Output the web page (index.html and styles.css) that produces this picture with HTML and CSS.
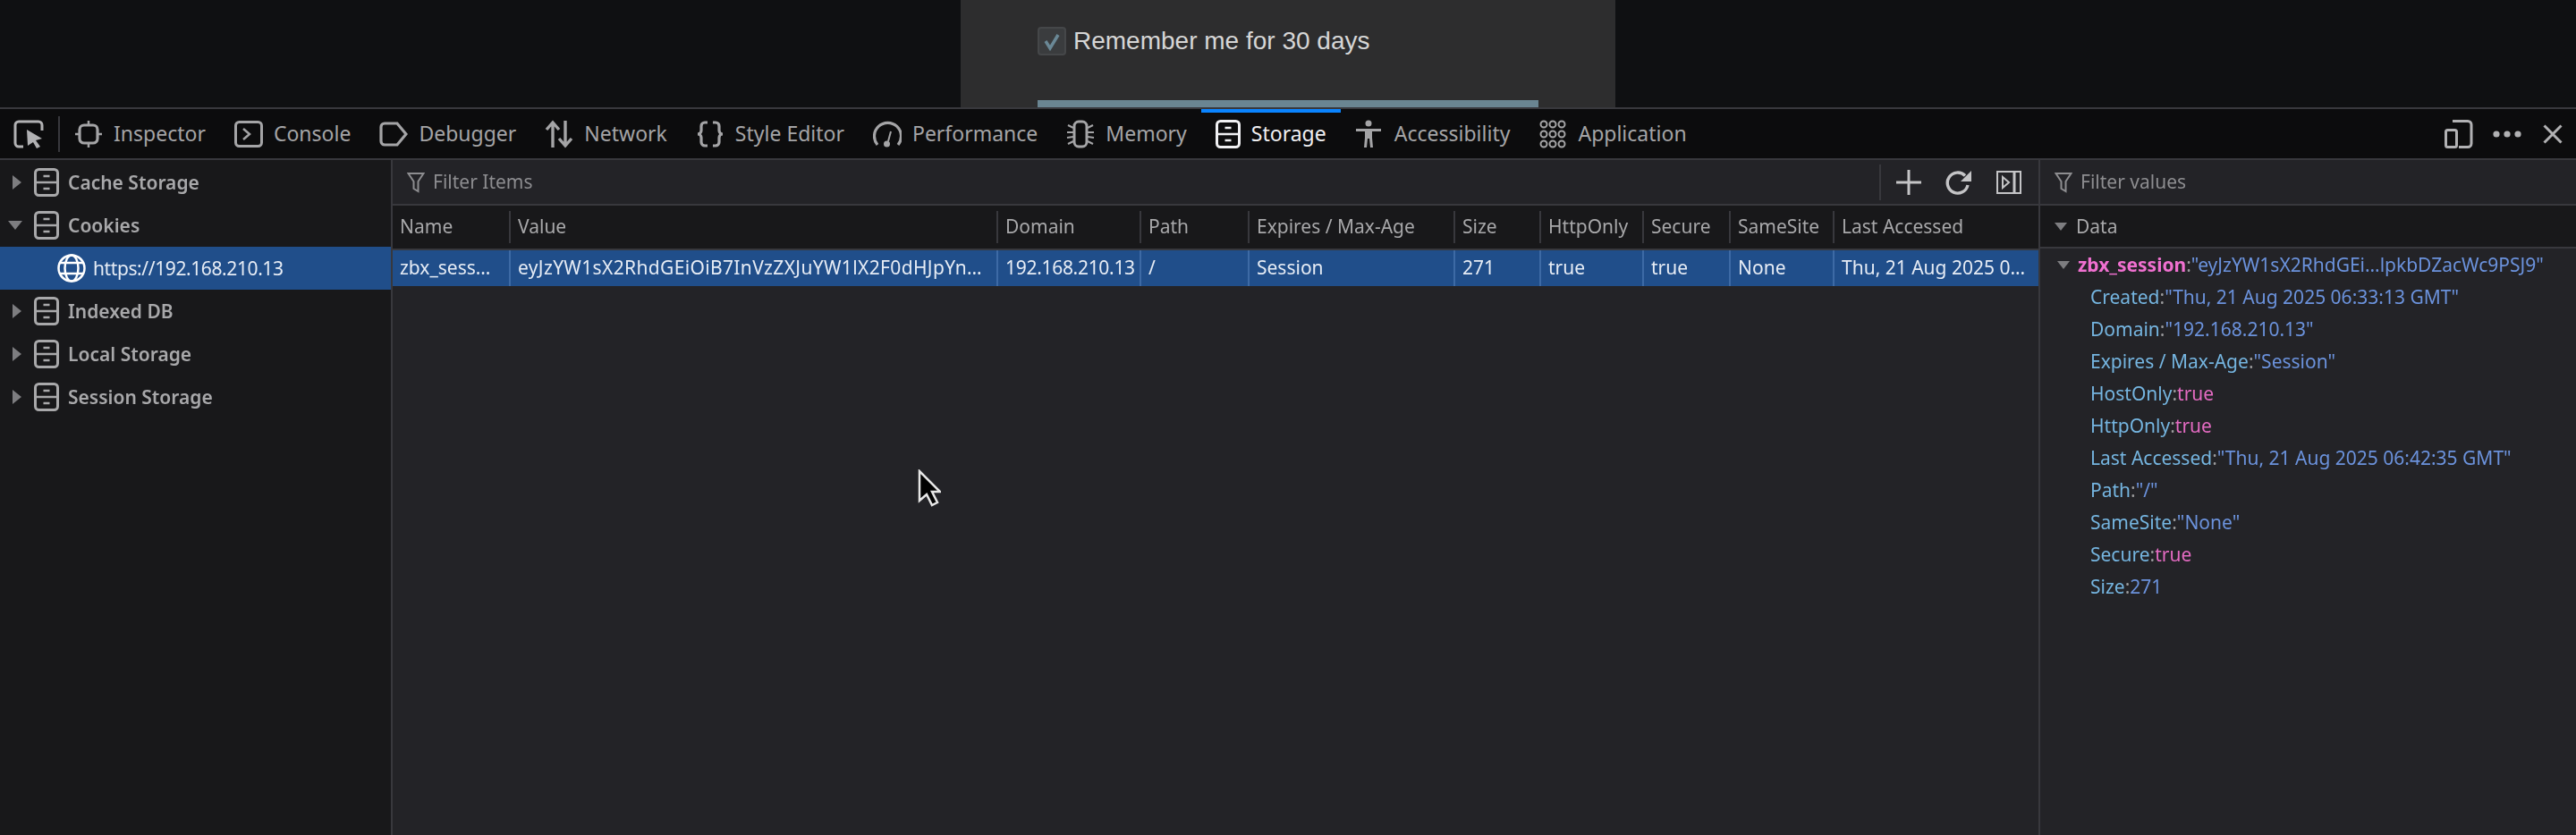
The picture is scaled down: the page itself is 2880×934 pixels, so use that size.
FILE: index.html
```html
<!DOCTYPE html>
<html lang="en">
<head>
<meta charset="utf-8">
<title>Storage</title>
<link rel="stylesheet" href="styles.css">
</head>
<body>
<svg class="defs" width="0" height="0" aria-hidden="true">
  <symbol id="cab" viewBox="0 0 28 32"><rect x="1.500" y="1.500" width="25" height="29" rx="4" fill="none" stroke="currentColor" stroke-width="3"/><path d="M2 16h24M10.500 9h7M10.500 23h7" fill="none" stroke="currentColor" stroke-width="2.600"/></symbol>
  <symbol id="funnel" viewBox="0 0 20 24"><path d="M1.500 2h17l-6 9v11l-5-3v-8z" fill="none" stroke="currentColor" stroke-width="2"/></symbol>
</svg>

<header class="page">
  <div class="login">
    <label class="remember"><span class="check"><svg viewBox="0 0 32 32" width="32" height="32"><path d="M9 16l5 8 9-15" fill="none" stroke="#6a8896" stroke-width="3.500"/></svg></span>Remember me for 30 days</label>
    <div class="submit"></div>
  </div>
</header>

<nav class="toolbar">
  <span class="picker"><svg viewBox="0 0 34 32" width="34" height="32"><path d="M11 30H6a4 4 0 0 1-4-4V6a4 4 0 0 1 4-4h22a4 4 0 0 1 4 4v6" fill="none" stroke="currentColor" stroke-width="3"/><path d="M15 11l17 10-7 2 5 7-4 2-4-7-6 4z" fill="currentColor"/></svg></span>
  <span class="vsep"></span>
  <a class="tab"><svg viewBox="0 0 32 32" width="32" height="32"><rect x="6" y="6" width="20" height="20" rx="5" fill="none" stroke="currentColor" stroke-width="3.200"/><path d="M16 1v5M16 26v5M1 16h5M26 16h5" stroke="currentColor" stroke-width="2.500"/></svg>Inspector</a>
  <a class="tab"><svg viewBox="0 0 32 32" width="32" height="32"><rect x="1.500" y="2.500" width="29" height="27" rx="4" fill="none" stroke="currentColor" stroke-width="3"/><path d="M10 10l7 6-7 6" fill="none" stroke="currentColor" stroke-width="2.500"/></svg>Console</a>
  <a class="tab"><svg viewBox="0 0 32 32" width="32" height="32"><path d="M6 4h14l10 12-10 12H6a4 4 0 0 1-4-4V8a4 4 0 0 1 4-4z" fill="none" stroke="currentColor" stroke-width="3.200"/></svg>Debugger</a>
  <a class="tab"><svg viewBox="0 0 32 32" width="32" height="32"><path d="M9 31V4M2 11l7-8 7 8M23 1v27M16 21l7 8 7-8" fill="none" stroke="currentColor" stroke-width="3.400"/></svg>Network</a>
  <a class="tab"><svg viewBox="0 0 32 32" width="32" height="32"><path d="M13 3H10a4 4 0 0 0-4 4v5a4 4 0 0 1-4 4 4 4 0 0 1 4 4v5a4 4 0 0 0 4 4h3M19 3h3a4 4 0 0 1 4 4v5a4 4 0 0 0 4 4 4 4 0 0 0-4 4v5a4 4 0 0 1-4 4h-3" fill="none" stroke="currentColor" stroke-width="3.200"/></svg>Style Editor</a>
  <a class="tab"><svg viewBox="0 0 32 32" width="32" height="32"><path d="M5 28A15 15 0 1 1 28 28" fill="none" stroke="currentColor" stroke-width="3.200"/><path d="M20 13l-3 11" stroke="currentColor" stroke-width="2"/><circle cx="15.500" cy="27" r="3.500" fill="currentColor"/></svg>Performance</a>
  <a class="tab"><svg viewBox="0 0 32 32" width="32" height="32"><rect x="9" y="2" width="14" height="28" rx="5" fill="none" stroke="currentColor" stroke-width="3"/><path d="M8 9L2 6M8 14H1M8 19l-7 1M8 24l-6 3M24 9l6-3M24 14h7M24 19l7 1M24 24l6 3" stroke="currentColor" stroke-width="2.200"/></svg>Memory</a>
  <a class="tab active"><svg width="28" height="32"><use href="#cab"/></svg>Storage</a>
  <a class="tab"><svg viewBox="0 0 32 32" width="32" height="32"><circle cx="15" cy="4" r="3.500" fill="currentColor"/><path d="M1 10h28v3H19v7l1 11h-3l-1-10h-2l-1 10h-3l1-11v-7H1z" fill="currentColor"/></svg>Accessibility</a>
  <a class="tab"><svg viewBox="0 0 32 32" width="32" height="32" fill="none" stroke="currentColor" stroke-width="2"><circle cx="6" cy="5" r="3.500"/><circle cx="16" cy="5" r="3.500"/><circle cx="26" cy="5" r="3.500"/><circle cx="6" cy="16" r="3.500"/><circle cx="16" cy="16" r="3.500"/><circle cx="26" cy="16" r="3.500"/><circle cx="6" cy="27" r="3.500"/><circle cx="16" cy="27" r="3.500"/><circle cx="26" cy="27" r="3.500"/></svg>Application</a>
  <span class="tool-end">
    <svg viewBox="0 0 32 32" width="32" height="32" fill="none" stroke="currentColor" stroke-width="3"><path d="M9 1.500h17a4 4 0 0 1 4 4v21a4 4 0 0 1-4 4H16"/><rect x="1.500" y="11.500" width="12" height="19" rx="2"/></svg>
    <svg viewBox="0 0 32 8" width="32" height="8" fill="currentColor"><circle cx="4" cy="4" r="3.600"/><circle cx="16" cy="4" r="3.600"/><circle cx="28" cy="4" r="3.600"/></svg>
    <svg class="close" viewBox="0 0 22 22" width="22" height="22"><path d="M1.500 1.500l19 19M20.500 1.500l-19 19" stroke="currentColor" stroke-width="3"/></svg>
  </span>
</nav>

<main class="panels">
  <aside class="tree">
    <div class="node"><i class="arrow right"></i><svg width="28" height="32"><use href="#cab"/></svg>Cache Storage</div>
    <div class="node"><i class="arrow down"></i><svg width="28" height="32"><use href="#cab"/></svg>Cookies</div>
    <div class="node leaf selected"><svg viewBox="0 0 32 32" width="32" height="32" fill="none" stroke="#fff" stroke-width="2.500"><circle cx="16" cy="16" r="14.500"/><ellipse cx="16" cy="16" rx="7.500" ry="14.500"/><path d="M3 10h26M3 22h26"/></svg>https://192.168.210.13</div>
    <div class="node"><i class="arrow right"></i><svg width="28" height="32"><use href="#cab"/></svg>Indexed DB</div>
    <div class="node"><i class="arrow right"></i><svg width="28" height="32"><use href="#cab"/></svg>Local Storage</div>
    <div class="node"><i class="arrow right"></i><svg width="28" height="32"><use href="#cab"/></svg>Session Storage</div>
  </aside>

  <section class="list">
    <div class="filter">
      <svg class="fn" width="20" height="24"><use href="#funnel"/></svg><span>Filter Items</span>
      <span class="filter-tools">
        <span class="vsep short"></span>
        <svg viewBox="0 0 28 28" width="28" height="28"><path d="M14 0v28M0 14h28" stroke="currentColor" stroke-width="3"/></svg>
        <svg viewBox="0 0 30 30" width="30" height="30"><path d="M25 18a11.500 11.500 0 1 1-3-10.500" fill="none" stroke="currentColor" stroke-width="3.400"/><path d="M29 2v12H17z" fill="currentColor"/></svg>
        <svg viewBox="0 0 28 28" width="28" height="28" fill="none" stroke="currentColor" stroke-width="2"><rect x="1" y="2" width="26" height="24"/><path d="M20 2v24" stroke-width="3"/><path d="M7 8l7 6-7 6z"/></svg>
      </span>
    </div>
    <div class="grid head">
      <span>Name</span><span>Value</span><span>Domain</span><span>Path</span><span>Expires / Max-Age</span><span>Size</span><span>HttpOnly</span><span>Secure</span><span>SameSite</span><span>Last Accessed</span>
    </div>
    <div class="grid row">
      <span>zbx_sess…</span><span class="long">eyJzYW1sX2RhdGEiOiB7InVzZXJuYW1lX2F0dHJpYn…</span><span class="num">192.168.210.13</span><span>/</span><span>Session</span><span>271</span><span>true</span><span>true</span><span>None</span><span>Thu, 21 Aug 2025 0…</span>
    </div>
  </section>

  <aside class="details">
    <div class="filter"><svg class="fn" width="20" height="24"><use href="#funnel"/></svg><span>Filter values</span></div>
    <div class="data-head"><i class="arrow down small"></i>Data</div>
    <div class="vars">
      <div class="var root"><i class="arrow down small"></i><b>zbx_session</b><u>:</u><em>"eyJzYW1sX2RhdGEi…lpkbDZacWc9PSJ9"</em></div>
      <div class="var"><s>Created</s><u>:</u><em>"Thu, 21 Aug 2025 06:33:13 GMT"</em></div>
      <div class="var"><s>Domain</s><u>:</u><em>"192.168.210.13"</em></div>
      <div class="var"><s>Expires / Max-Age</s><u>:</u><em>"Session"</em></div>
      <div class="var"><s>HostOnly</s><u>:</u><q>true</q></div>
      <div class="var"><s>HttpOnly</s><u>:</u><q>true</q></div>
      <div class="var"><s>Last Accessed</s><u>:</u><em>"Thu, 21 Aug 2025 06:42:35 GMT"</em></div>
      <div class="var"><s>Path</s><u>:</u><em>"/"</em></div>
      <div class="var"><s>SameSite</s><u>:</u><em>"None"</em></div>
      <div class="var"><s>Secure</s><u>:</u><q>true</q></div>
      <div class="var"><s>Size</s><u>:</u><em>271</em></div>
    </div>
  </aside>
</main>

<svg class="cursor" viewBox="0 0 26 42" width="26" height="42"><path d="M2 2v33l8-7 6 12 6-3-6-12h9z" fill="#000" stroke="#e6e6e6" stroke-width="2.500"/></svg>
</body>
</html>
```

FILE: styles.css
```css
* { box-sizing: border-box; }
html, body { margin: 0; height: 100%; }
body {
  width: 2880px; height: 934px; overflow: hidden; position: relative;
  background: #232327; color: #b1b1b3;
  font: 21px/1 "Noto Sans", sans-serif;
  display: flex; flex-direction: column;
  filter: blur(.45px);
}
.defs { position: absolute; }
svg { flex: none; display: block; }

.page { height: 120px; background: #0f1012; flex: none; }
.login {
  width: 732px; height: 120px; margin-left: 1074px; background: #2d2d2e;
  padding: 30px 86px 0; display: flex; flex-direction: column;
}
.remember { display: flex; align-items: center; height: 32px; gap: 8px; color: #d6d6d6; font: 28px/32px "Liberation Sans", sans-serif; }
.check { width: 32px; height: 32px; background: #3a3c3e; border: 2px solid #454749; border-radius: 4px; }
.check svg { margin: -2px; }
.submit { margin-top: 50px; height: 8px; width: 560px; background: #6a8592; }

.toolbar {
  height: 59px; flex: none; background: #0c0c0d; display: flex; align-items: center;
  border-top: 2px solid #38383d; border-bottom: 2px solid #38383d; padding-left: 15px;
  font-size: 23px;
}
.picker { width: 34px; display: block; }
.vsep { width: 2px; height: 40px; background: #38383d; margin-left: 16px; }
.tab {
  height: 100%; display: flex; align-items: center; gap: 12px; padding: 0 16px 4px;
  color: #a4a4a6; border-top: 4px solid transparent;
}
.tab.active { color: #f0f0f2; border-top-color: #0a84ff; }
.tool-end { margin-left: auto; display: flex; align-items: center; gap: 22px; padding-right: 15px; }
.close { margin-left: 2px; }

.panels { flex: 1; display: flex; min-height: 0; }
.tree { width: 439px; background: #18181a; border-right: 2px solid #38383d; flex: none; padding-top: 1px; }
.node { height: 48px; display: flex; align-items: center; padding-left: 38px; gap: 10px; font-weight: 600; color: #a8a8aa; position: relative; }
.node.leaf { padding-left: 64px; gap: 8px; font-weight: 400; color: #e6ecf5; letter-spacing: -.4px; }
.selected { background: #204e8a; }
.arrow { display: block; width: 0; height: 0; border-style: solid; border-color: transparent; }
.node .arrow { position: absolute; }
.arrow.right { left: 14px; border-width: 8px 0 8px 10px; border-left-color: #7d7d80; }
.arrow.down { left: 9px; border-width: 10px 8px 0; border-top-color: #7d7d80; }
.arrow.small { position: static; border-width: 9px 7px 0; }

.list { flex: 1; min-width: 0; display: flex; flex-direction: column; }
.filter { height: 51px; flex: none; display: flex; align-items: center; padding-left: 16px; gap: 9px; border-bottom: 2px solid #38383d; color: #8d8d90; background: #232327; }
.fn { color: #8d8d90; }
.filter-tools { margin-left: auto; display: flex; align-items: center; gap: 27px; padding-right: 19px; color: #c4c4c6; }
.vsep.short { margin: 0 -10px 0 0; }

.grid { display: grid; grid-template-columns: 130px 545px 160px 121px 230px 96px 115px 97px 116px 230px; }
.grid span { padding-left: 8px; white-space: nowrap; overflow: hidden; border-left: 2px solid transparent; }
.grid span:first-child { border-left: 0; }
.head { height: 50px; flex: none; background: #18181a; border-bottom: 2px solid #38383d; align-items: center; color: #a8a8aa; }
.head span { height: 36px; line-height: 34px; border-left-color: #38383d; }
.row { height: 40px; flex: none; background: #204e8a; color: #e6ecf5; }
.row span { line-height: 38px; border-left-color: #3d6aa5; }
.row .long { letter-spacing: .35px; }
.row .num { letter-spacing: -.3px; }

.details { width: 601px; flex: none; border-left: 2px solid #38383d; }
.data-head { height: 48px; background: #18181a; border-bottom: 2px solid #38383d; display: flex; align-items: center; gap: 10px; padding-left: 16px; color: #a8a8aa; }
.var { height: 36px; line-height: 36px; padding-left: 56px; white-space: nowrap; display: flex; }
.var.root { padding-left: 19px; align-items: center; }
.var.root .arrow { margin-right: 9px; }
.var b { color: #f070d0; font-weight: 700; }
.var u { text-decoration: none; color: #9a9a9c; }
.var s { text-decoration: none; color: #75b5e0; }
.var em { font-style: normal; color: #6b92dc; }
.var q { quotes: none; color: #e46bc2; }

.cursor { position: absolute; left: 1026px; top: 525px; }
```
